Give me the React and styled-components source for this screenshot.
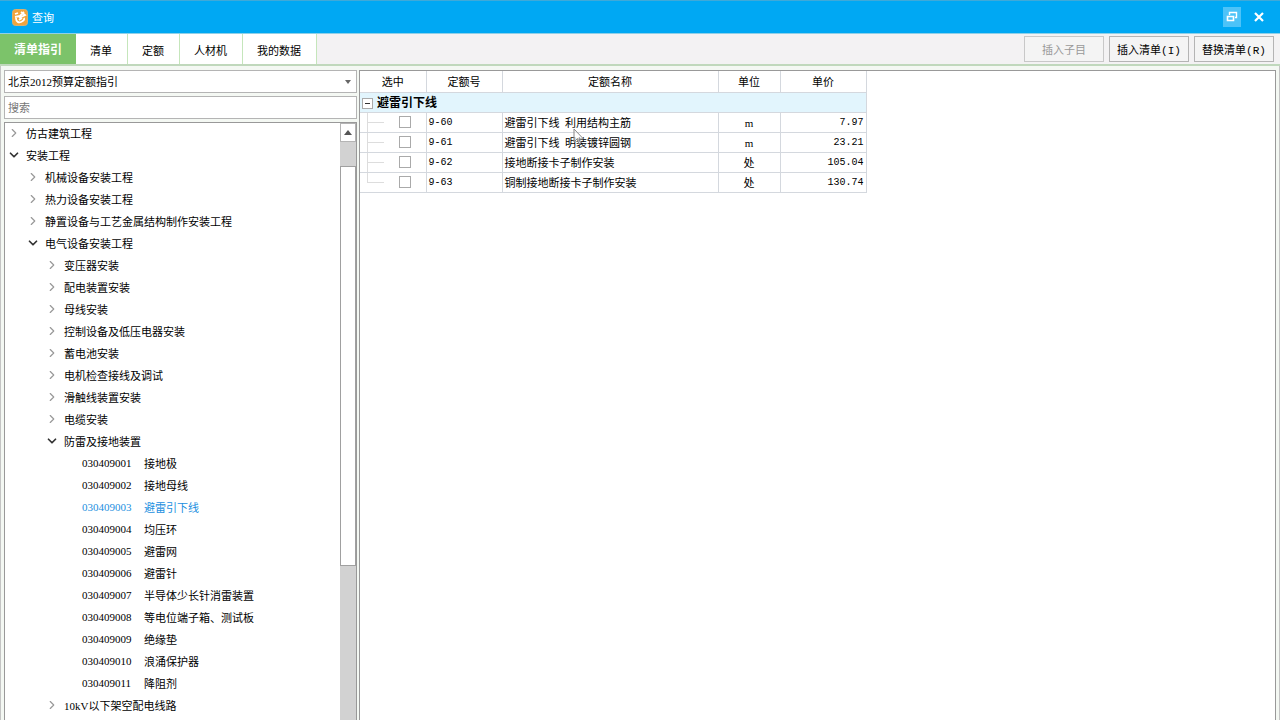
import styled, { createGlobalStyle } from "styled-components";
import { ChevronDown, ChevronRight } from "lucide-react";

const tree = [
    { level: 0, name: "仿古建筑工程" },
    { level: 0, name: "安装工程", open: true },
    { level: 1, name: "机械设备安装工程" },
    { level: 1, name: "热力设备安装工程" },
    { level: 1, name: "静置设备与工艺金属结构制作安装工程" },
    { level: 1, name: "电气设备安装工程", open: true },
    { level: 2, name: "变压器安装" },
    { level: 2, name: "配电装置安装" },
    { level: 2, name: "母线安装" },
    { level: 2, name: "控制设备及低压电器安装" },
    { level: 2, name: "蓄电池安装" },
    { level: 2, name: "电机检查接线及调试" },
    { level: 2, name: "滑触线装置安装" },
    { level: 2, name: "电缆安装" },
    { level: 2, name: "防雷及接地装置", open: true },
    { level: 3, code: "030409001", name: "接地极" },
    { level: 3, code: "030409002", name: "接地母线" },
    { level: 3, code: "030409003", name: "避雷引下线", active: true },
    { level: 3, code: "030409004", name: "均压环" },
    { level: 3, code: "030409005", name: "避雷网" },
    { level: 3, code: "030409006", name: "避雷针" },
    { level: 3, code: "030409007", name: "半导体少长针消雷装置" },
    { level: 3, code: "030409008", name: "等电位端子箱、测试板" },
    { level: 3, code: "030409009", name: "绝缘垫" },
    { level: 3, code: "030409010", name: "浪涌保护器" },
    { level: 3, code: "030409011", name: "降阻剂" },
    { level: 2, name: "10kV以下架空配电线路" },
    { level: 2, name: "配管、配线" },
];

const quotas = [
    { code: "9-60", name: "避雷引下线\u00a0 利用结构主筋", unit: "m", price: "7.97" },
    { code: "9-61", name: "避雷引下线\u00a0 明装镀锌圆钢", unit: "m", price: "23.21" },
    { code: "9-62", name: "接地断接卡子制作安装", unit: "处", price: "105.04" },
    { code: "9-63", name: "铜制接地断接卡子制作安装", unit: "处", price: "130.74" },
];

const tabs = ["清单指引", "清单", "定额", "人材机", "我的数据"];

const App = () => {
    return (
        <Window>
            <GlobalStyle />
            <TitleBar>
                <Logo />
                <Title>查询</Title>
                <WindowButton $filled aria-label="还原">
                    <svg width="12" height="12" viewBox="0 0 12 12" fill="none" stroke="#fff">
                        <path d="M3.5 4V1.5h7v5H9" strokeWidth="1.4" />
                        <path d="M1.5 5.5h6v4h-6zM1 5.5h7" strokeWidth="1.6" />
                    </svg>
                </WindowButton>
                <WindowButton aria-label="关闭">
                    <svg width="10" height="10" viewBox="0 0 10 10" stroke="#fff" strokeWidth="2.2">
                        <path d="M1 1l8 8M9 1l-8 8" />
                    </svg>
                </WindowButton>
            </TitleBar>
            <Toolbar>
                {tabs.map((tab, i) => (
                    <Tab key={tab} $active={i === 0}>
                        {tab}
                    </Tab>
                ))}
                <Actions>
                    <ActionButton disabled>插入子目</ActionButton>
                    <ActionButton>插入清单(I)</ActionButton>
                    <ActionButton>替换清单(R)</ActionButton>
                </Actions>
            </Toolbar>
            <Body>
                <Sidebar>
                    <SelectBox>
                        <select aria-label="定额库">
                            <option>北京2012预算定额指引</option>
                        </select>
                        <svg width="6" height="4" viewBox="0 0 6 4" fill="#666">
                            <path d="M0 0h6L3 4z" />
                        </svg>
                    </SelectBox>
                    <Search aria-label="搜索" placeholder="搜索" />
                    <TreeBox>
                        <Tree>
                            {tree.map((node) => (
                                <TreeRow key={node.code || node.name} $level={node.level} $active={node.active}>
                                    {!node.code && (
                                        <Toggle aria-label={node.name} $open={node.open}>
                                            {node.open ? (
                                                <ChevronDown size={14} strokeWidth={3} />
                                            ) : (
                                                <ChevronRight size={14} strokeWidth={2} />
                                            )}
                                        </Toggle>
                                    )}
                                    {node.code && <Code>{node.code}</Code>}
                                    <span>{node.name}</span>
                                </TreeRow>
                            ))}
                        </Tree>
                        <ScrollBar>
                            <ScrollUp aria-label="向上滚动">
                                <svg width="8" height="5" viewBox="0 0 8 5" fill="#555">
                                    <path d="M0 5h8L4 0z" />
                                </svg>
                            </ScrollUp>
                            <ScrollThumb />
                        </ScrollBar>
                    </TreeBox>
                </Sidebar>
                <Content>
                    <Table>
                        <colgroup>
                            <col width="66" />
                            <col width="76" />
                            <col width="216" />
                            <col width="62" />
                            <col width="86" />
                        </colgroup>
                        <thead>
                            <tr>
                                <th>选中</th>
                                <th>定额号</th>
                                <th>定额名称</th>
                                <th>单位</th>
                                <th>单价</th>
                            </tr>
                        </thead>
                        <tbody>
                            <GroupRow>
                                <td colSpan="5">
                                    <GroupLabel>
                                        <Collapse aria-label="折叠" />
                                        避雷引下线
                                    </GroupLabel>
                                </td>
                            </GroupRow>
                            {quotas.map((row, i) => (
                                <tr key={row.code}>
                                    <CheckCell>
                                        <CheckWrap>
                                            <Branch $last={i === quotas.length - 1} />
                                            <Check type="checkbox" aria-label={row.code} />
                                        </CheckWrap>
                                    </CheckCell>
                                    <NumberCell>{row.code}</NumberCell>
                                    <td>{row.name}</td>
                                    <UnitCell>{row.unit}</UnitCell>
                                    <PriceCell>{row.price}</PriceCell>
                                </tr>
                            ))}
                        </tbody>
                    </Table>
                    <Cursor />
                </Content>
            </Body>
        </Window>
    );
};

const Logo = () => (
    <svg width="16" height="17" viewBox="0 0 16 17" fill="none">
        <rect x="0.5" y="0.5" width="15" height="16" rx="3" fill="#f0a43c" stroke="#d9b070" />
        <path d="M3 5l3-1M3 8l5-1 4-4M9 3l4 3-6 3" stroke="#fff" strokeWidth="1.8" />
        <path d="M4 9c0 4 3 5 5 4s4-2 3-4M7 11l3-2" stroke="#fff" strokeWidth="1.8" />
    </svg>
);

const Cursor = () => (
    <Pointer width="12" height="18" viewBox="0 0 12 18">
        <path d="M1 1v13l3-3 2 5 2-1-2-4h4.500z" fill="#fff" fillOpacity="0.5" stroke="#888" />
    </Pointer>
);

const GlobalStyle = createGlobalStyle`
    * {
        box-sizing: border-box;
    }

    body {
        margin: 0;
        overflow: hidden;
    }

    body,
    button,
    input,
    select {
        font-family: "Liberation Serif", "Noto Sans CJK SC", serif;
        font-size: 11px;
        color: #000;
    }
`;

const Window = styled.div`
    display: flex;
    flex-direction: column;
    height: 100vh;
    background: #f5f5f5;
`;

const TitleBar = styled.header`
    display: flex;
    align-items: center;
    height: 34px;
    flex-shrink: 0;
    padding: 0 12px;
    background: #00a8f3;
    border-top: 1px solid #3fa9d8;
    border-bottom: 1px solid #8fd0e8;
`;

const Title = styled.span`
    flex: 1;
    margin-left: 4px;
    color: #fff;
`;

const WindowButton = styled.button`
    display: flex;
    align-items: center;
    justify-content: center;
    width: 18px;
    height: 20px;
    margin-left: 9px;
    padding: 0;
    border: none;
    background: ${(props) => (props.$filled ? "#4dc3f8" : "transparent")};
`;

const Toolbar = styled.div`
    display: flex;
    flex-shrink: 0;
    height: 32px;
    background: #f3f2f3;
    border-bottom: 2px solid #c0d8bc;
`;

const Tab = styled.button`
    padding: 2px 15px 0 14px;
    border: none;
    border-right: 1px solid #c5e6bb;
    background: #fff;

    ${(props) =>
        props.$active &&
        `
        padding: 0 14px;
        border: none;
        background: #7cc36a;
        color: #fff;
        font-size: 12px;
        font-weight: bold;
    `}
`;

const Actions = styled.div`
    display: flex;
    gap: 5px;
    margin-left: auto;
    padding: 2px 6px 2px 0;
`;

const ActionButton = styled.button`
    width: 80px;
    padding: 0;
    border: 1px solid #b4b4b4;
    background: #f4f4f4;
    font-family: "Liberation Mono", "Noto Sans CJK SC", monospace;

    &:disabled {
        color: #999;
        border-color: #c8c8c8;
    }
`;

const Body = styled.main`
    display: flex;
    flex: 1;
    min-height: 0;
    gap: 2px;
    padding: 4px 3px 0;
    border: 1px solid #c4c4c4;
    border-width: 0 1px;
    background: #f4f8f3;
`;

const Sidebar = styled.aside`
    display: flex;
    flex-direction: column;
    gap: 3px;
    width: 353px;
    flex-shrink: 0;
`;

const SelectBox = styled.div`
    display: flex;
    align-items: center;
    height: 23px;
    flex-shrink: 0;
    padding-right: 5px;
    border: 1px solid #b4b4b4;
    background: #fff;

    select {
        flex: 1;
        appearance: none;
        padding: 0 3px;
        border: none;
        background: transparent;
    }
`;

const Search = styled.input`
    height: 23px;
    flex-shrink: 0;
    padding: 0 3px;
    border: 1px solid #b4b4b4;

    &::placeholder {
        color: #777;
    }
`;

const TreeBox = styled.div`
    display: flex;
    flex: 1;
    min-height: 0;
    border: 1px solid #999;
    border-bottom: none;
    background: #fff;
`;

const Tree = styled.div`
    flex: 1;
    overflow: hidden;
`;

const TreeRow = styled.div`
    display: flex;
    align-items: center;
    height: 22px;
    padding-left: ${(props) => 2 + props.$level * 19 + (props.$level === 3 ? 18 : 0)}px;
    padding-bottom: 2px;
    white-space: nowrap;
    color: ${(props) => (props.$active ? "#1c8fe0" : "#000")};
`;

const Toggle = styled.button`
    display: flex;
    width: 14px;
    margin-right: 5px;
    padding: 0;
    border: none;
    background: none;
    color: ${(props) => (props.$open ? "#333" : "#999")};
`;

const Code = styled.span`
    width: 62px;
`;

const ScrollBar = styled.div`
    display: flex;
    flex-direction: column;
    width: 16px;
    background: #d2d2d2;
`;

const ScrollUp = styled.button`
    display: flex;
    align-items: center;
    justify-content: center;
    height: 19px;
    padding: 0;
    border: 1px solid #b4b4b4;
    background: #fff;
`;

const ScrollThumb = styled.div`
    height: 67%;
    margin-top: 24px;
    border: 1px solid #a0a0a0;
    background: #fff;
`;

const Content = styled.section`
    position: relative;
    flex: 1;
    border: 1px solid #999;
    border-bottom: none;
    background: #fff;
`;

const Table = styled.table`
    width: 506px;
    table-layout: fixed;
    border-collapse: collapse;

    th,
    td {
        height: 20px;
        padding: 2px 2px 0;
        border: 1px solid #d4d8de;
        border-left: none;
        line-height: 16px;
        white-space: nowrap;
    }

    th {
        height: 21px;
        border-top: none;
        font-weight: normal;
    }
`;

const GroupRow = styled.tr`
    background: #e2f5fd;
    font-weight: bold;
`;

const GroupLabel = styled.div`
    display: flex;
    align-items: center;
    gap: 4px;
    font-size: 12px;
`;

const Collapse = styled.button`
    display: flex;
    align-items: center;
    justify-content: center;
    width: 11px;
    height: 11px;
    padding: 0;
    border: 1px solid #aaa;
    background: #fff;

    &::before {
        content: "";
        width: 5px;
        height: 1px;
        background: #333;
    }
`;

const CheckCell = styled.td`
    && {
        padding: 0;
    }
`;

const CheckWrap = styled.div`
    display: flex;
    height: 19px;
    padding-left: 7px;
`;

const Branch = styled.span`
    width: 17px;
    height: 100%;
    background: linear-gradient(#ddd, #ddd) 0 9px / 100% 1px no-repeat,
        linear-gradient(#ddd, #ddd) 0 0 / 1px ${(props) => (props.$last ? "9px" : "100%")} no-repeat;
`;

const Check = styled.input`
    appearance: none;
    width: 12px;
    height: 12px;
    margin: 3px 0 0 15px;
    border: 1px solid #aaa;
    background: #fff;
`;

const NumberCell = styled.td`
    font-family: "Liberation Mono", monospace;
    font-size: 10px;
`;

const UnitCell = styled.td`
    text-align: center;
`;

const PriceCell = styled(NumberCell)`
    text-align: right;
`;

const Pointer = styled.svg`
    position: absolute;
    left: 213px;
    top: 57px;
`;

export default App;
